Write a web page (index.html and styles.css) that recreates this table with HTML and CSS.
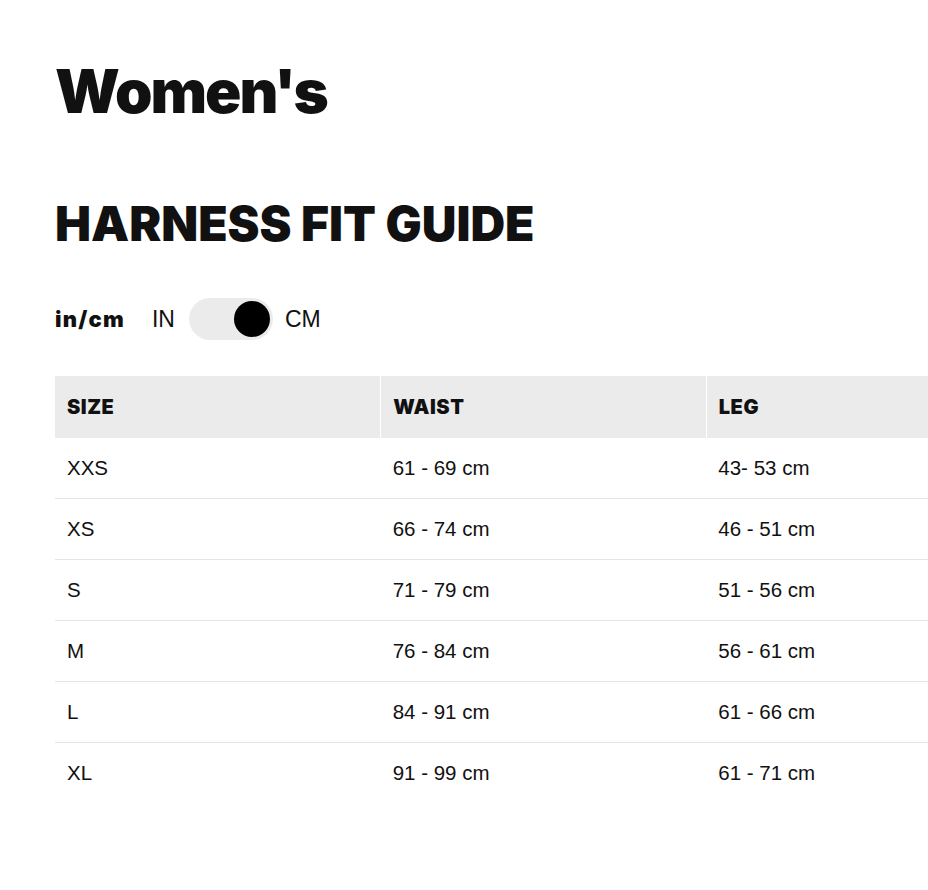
FILE: index.html
```html
<!DOCTYPE html>
<html lang="en">
<head>
<meta charset="utf-8">
<title>Women's Harness Fit Guide</title>
<link rel="stylesheet" href="styles.css">
</head>
<body>
<main class="page">
  <h1 class="title">Women's</h1>
  <h2 class="subtitle">HARNESS FIT GUIDE</h2>
  <div class="units">
    <span class="units-label">in/cm</span>
    <span class="unit unit-in">IN</span>
    <span class="switch" role="switch" aria-checked="true"><span class="knob"></span></span>
    <span class="unit">CM</span>
  </div>
  <table class="fit">
    <thead>
      <tr><th>SIZE</th><th>WAIST</th><th>LEG</th></tr>
    </thead>
    <tbody>
      <tr><td>XXS</td><td>61 - 69 cm</td><td>43- 53 cm</td></tr>
      <tr><td>XS</td><td>66 - 74 cm</td><td>46 - 51 cm</td></tr>
      <tr><td>S</td><td>71 - 79 cm</td><td>51 - 56 cm</td></tr>
      <tr><td>M</td><td>76 - 84 cm</td><td>56 - 61 cm</td></tr>
      <tr><td>L</td><td>84 - 91 cm</td><td>61 - 66 cm</td></tr>
      <tr><td>XL</td><td>91 - 99 cm</td><td>61 - 71 cm</td></tr>
    </tbody>
  </table>
</main>
</body>
</html>
```

FILE: styles.css
```css
html, body {
  margin: 0;
  padding: 0;
  background: #fff;
  overflow: hidden;
}
body {
  font-family: "Liberation Sans", Arial, sans-serif;
  color: #111;
}
.page {
  padding: 61px 0 0 55px;
}
.title {
  margin: 0;
  font-family: "Inter", "Lato", sans-serif;
  font-weight: 900;
  font-size: 60px;
  line-height: 1;
  letter-spacing: -2px;
}
.subtitle {
  margin: 79px 0 0;
  font-family: "Inter", "Lato", sans-serif;
  font-weight: 900;
  font-size: 48px;
  line-height: 1;
  letter-spacing: 0;
}
.units {
  margin-top: 50px;
  display: flex;
  align-items: center;
  height: 42px;
}
.units-label {
  font-family: "Inter", "Lato", sans-serif;
  font-weight: 900;
  font-size: 22px;
  letter-spacing: 1.2px;
  margin-right: 27px;
}
.unit {
  font-size: 23px;
}
.unit-in {
  margin-right: 14px;
}
.switch {
  width: 84px;
  height: 42px;
  border-radius: 21px;
  background: #ebebeb;
  display: flex;
  align-items: center;
  justify-content: flex-end;
  padding: 0 3px;
  box-sizing: border-box;
  margin-right: 12px;
}
.knob {
  width: 36px;
  height: 36px;
  border-radius: 50%;
  background: #000;
}
.fit {
  margin-top: 36px;
  border-collapse: collapse;
  width: 977px;
  table-layout: fixed;
}
.fit th {
  background: #ebebeb;
  height: 62px;
  padding: 0 12px;
  text-align: left;
  font-family: "Inter", "Lato", sans-serif;
  font-weight: 900;
  font-size: 20px;
  letter-spacing: 0.5px;
  border-left: 1px solid #fff;
}
.fit th:first-child {
  border-left: 0;
}
.fit td {
  height: 60px;
  padding: 0 12px;
  font-size: 20.5px;
  border-top: 1px solid #e5e5e5;
}
.fit tbody tr:first-child td {
  border-top: 0;
}
```
